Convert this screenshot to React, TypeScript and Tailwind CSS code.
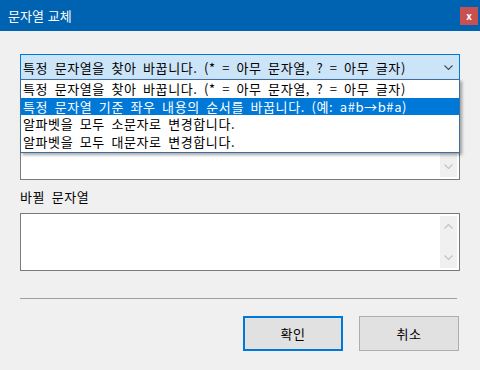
import React from "react";

const font = { fontFamily: '"Noto Sans CJK KR", "Noto Sans", sans-serif' };

function ChevronDown({ className }: { className?: string }) {
  return (
    <svg width="9" height="5" viewBox="0 0 9 5" className={className}>
      <path d="M0.5 0.5 L4.5 4.5 L8.5 0.5" fill="none" stroke="currentColor" strokeWidth="1.1" />
    </svg>
  );
}
function ChevronUp({ className }: { className?: string }) {
  return (
    <svg width="9" height="5" viewBox="0 0 9 5" className={className}>
      <path d="M0.5 4.5 L4.5 0.5 L8.5 4.5" fill="none" stroke="currentColor" strokeWidth="1.1" />
    </svg>
  );
}

function TextBox() {
  return (
    <div className="h-[58px] w-full border border-[#7a7a7a] bg-white flex justify-end p-[2px]">
      <div className="w-[17px] h-full bg-[#f0f0f0] flex flex-col items-center justify-between py-[8px] text-[#c2c2c2]">
        <ChevronUp />
        <ChevronDown />
      </div>
    </div>
  );
}

const items = [
  "특정 문자열을 찾아 바꿉니다. (* = 아무 문자열, ? = 아무 글자)",
  "특정 문자열 기준 좌우 내용의 순서를 바꿉니다. (예: a#b→b#a)",
  "알파벳을 모두 소문자로 변경합니다.",
  "알파벳을 모두 대문자로 변경합니다.",
];

export default function App() {
  return (
    <div
      className="w-[480px] h-[370px] bg-[#f0f0f0] flex flex-col text-[13px] tracking-[0.6px] [word-spacing:3px] text-black overflow-hidden"
      style={font}
    >
      <div className="h-[31px] bg-[#0063b1] flex items-center justify-between pl-[8px] pr-[2px]">
        <span className="text-white text-[13px] leading-none tracking-normal [word-spacing:1px]">문자열 교체</span>
        <div className="w-[18px] h-[18px] bg-[#c75050] flex items-center justify-center text-white text-[10px] font-bold leading-none tracking-normal mb-[-1px]">
          x
        </div>
      </div>
      <div className="flex flex-col px-[20px] pt-[23px]">
        <div className="relative">
          <div className="h-[26px] border border-[#0078d7] bg-[#cce4f7] flex items-center justify-between pl-[2px] pr-[6px]">
            <span className="leading-none whitespace-nowrap">{items[0]}</span>
            <ChevronDown className="text-[#4a4a4a]" />
          </div>
          <div className="absolute left-0 top-[25px] w-[440px] border border-[#3f6f9f] bg-white shadow-[2px_2px_3px_rgba(0,0,0,0.35)] z-10 pb-[2px]">
            {items.map((t, i) => (
              <div
                key={i}
                className={
                  "h-[17.5px] flex items-center pl-[2px] leading-none whitespace-nowrap " +
                  (i === 1 ? "bg-[#0078d7] text-white" : "")
                }
              >
                {t}
              </div>
            ))}
          </div>
        </div>
        <div className="mt-[17px] h-[17px] flex items-center leading-none invisible">찾을 문자열</div>
        <div className="mt-[8px]">
          <TextBox />
        </div>
        <div className="mt-[8px] h-[17px] flex items-center leading-none">바뀔 문자열</div>
        <div className="mt-[8px]">
          <TextBox />
        </div>
        <div className="mt-[27px] h-px w-[437px] bg-[#a0a0a0]" />
        <div className="mt-[17px] flex justify-end gap-[16px] pr-[1px]">
          <button className="w-[100px] h-[35px] border-2 border-[#0078d7] bg-[#e1e1e1] text-[13px] tracking-[0.6px]" style={font}>
            확인
          </button>
          <button className="w-[100px] h-[35px] border border-[#adadad] bg-[#e1e1e1] text-[13px] tracking-[0.6px]" style={font}>
            취소
          </button>
        </div>
      </div>
    </div>
  );
}
